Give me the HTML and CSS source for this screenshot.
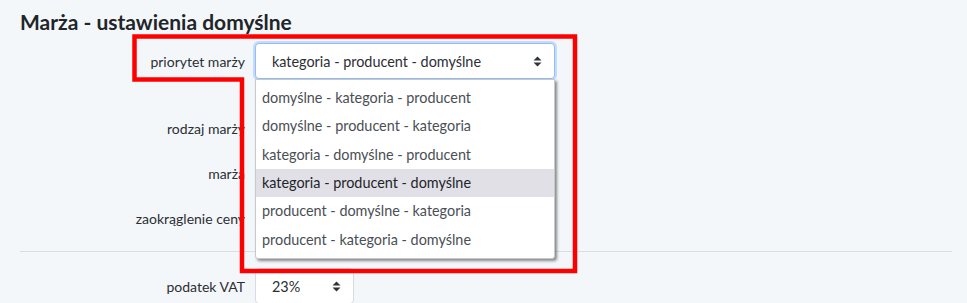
FILE: index.html
```
<!DOCTYPE html>
<html lang="pl">
<head>
<meta charset="utf-8">
<title>Marża - ustawienia domyślne</title>
<link rel="stylesheet" href="styles.css">
</head>
<body>
<div class="page">
  <h2 class="title">Marża - ustawienia domyślne</h2>
  <form class="form">
    <div class="row row-first">
      <label class="lbl">priorytet marży</label>
      <div class="ctrl">
        <div class="select focused">
          <span class="sel-text">kategoria - producent - domyślne</span>
          <svg class="arrows" width="9" height="11" viewBox="0 0 9 11"><path d="M0.5 4.5 L4.5 0.5 L8.5 4.5 Z M0.5 6.5 L4.5 10.5 L8.5 6.5 Z" fill="#2f3438"/></svg>
        </div>
        <ul class="dropdown">
          <li class="opt">domyślne - kategoria - producent</li>
          <li class="opt">domyślne - producent - kategoria</li>
          <li class="opt">kategoria - domyślne - producent</li>
          <li class="opt active">kategoria - producent - domyślne</li>
          <li class="opt">producent - domyślne - kategoria</li>
          <li class="opt">producent - kategoria - domyślne</li>
        </ul>
      </div>
    </div>
    <div class="row">
      <label class="lbl">rodzaj marży</label>
      <div class="ctrl"><div class="select"></div></div>
    </div>
    <div class="row">
      <label class="lbl">marża</label>
      <div class="ctrl"><div class="select"></div></div>
    </div>
    <div class="row">
      <label class="lbl">zaokrąglenie ceny</label>
      <div class="ctrl"><div class="select"></div></div>
    </div>
    <hr class="sep">
    <div class="row">
      <label class="lbl">podatek VAT</label>
      <div class="ctrl">
        <div class="select small">
          <span class="sel-text">23%</span>
          <svg class="arrows" width="9" height="11" viewBox="0 0 9 11"><path d="M0.5 4.5 L4.5 0.5 L8.5 4.5 Z M0.5 6.5 L4.5 10.5 L8.5 6.5 Z" fill="#2f3438"/></svg>
        </div>
      </div>
    </div>
  </form>
</div>
<svg class="annot" width="967" height="303" viewBox="0 0 967 303">
  <path d="M134.5 36.5 H575 V271 H242 V79.5 H134.5 Z" fill="none" stroke="#ff0000" stroke-width="4.5"/>
</svg>
</body>
</html>
```
FILE: styles.css
```
html, body {
  margin: 0;
  padding: 0;
}
body {
  background: #f4f7fa;
  font-family: Lato, "Noto Sans", sans-serif;
  color: #2b2f33;
  width: 967px;
  height: 303px;
  overflow: hidden;
  position: relative;
}
.page {
  padding: 0 15px 0 20px;
}
.title {
  margin: 0;
  padding-top: 10px;
  font-size: 21px;
  line-height: 24px;
  font-weight: 700;
  color: #212529;
}
.form {
  margin-top: 9px;
}
.row {
  display: flex;
  align-items: center;
  gap: 10px;
  height: 36px;
  margin-bottom: 9px;
}
.row-first {
  margin-bottom: 31px;
}
.lbl {
  width: 225px;
  text-align: right;
  font-size: 14px;
  color: #2b2f33;
}
.ctrl {
  position: relative;
}
.select {
  box-sizing: border-box;
  width: 300px;
  height: 36px;
  background: #fff;
  border: 1px solid #d7dce1;
  border-radius: 4px;
  display: flex;
  align-items: center;
  justify-content: space-between;
  padding: 0 12px 0 16px;
  font-size: 14.4px;
  color: #2b2f33;
}
.select.focused {
  border-color: #93bdf5;
  box-shadow: 0 0 0 2px #c4dcfb;
}
.select.small {
  width: 99px;
}
.arrows {
  display: block;
}
.dropdown {
  position: absolute;
  left: 0;
  top: 36px;
  width: 300px;
  box-sizing: border-box;
  margin: 0;
  padding: 4px 0 4px;
  list-style: none;
  background: #fff;
  border: 1px solid #c9c9c9;
  border-radius: 0 0 3px 3px;
  box-shadow: 2px 2px 3px rgba(0, 0, 0, 0.45);
  z-index: 2;
}
.opt {
  height: 28.33px;
  line-height: 28.33px;
  padding-left: 6px;
  font-size: 14.4px;
  color: #4a4f55;
  white-space: nowrap;
}
.opt.active {
  background: #e1e0e6;
  color: #212529;
}
.sep {
  margin: 15px 0 16px;
  border: 0;
  border-top: 1px solid #d9dee4;
  height: 0;
}
.annot {
  position: absolute;
  left: 0;
  top: 0;
  pointer-events: none;
  z-index: 5;
}
```
